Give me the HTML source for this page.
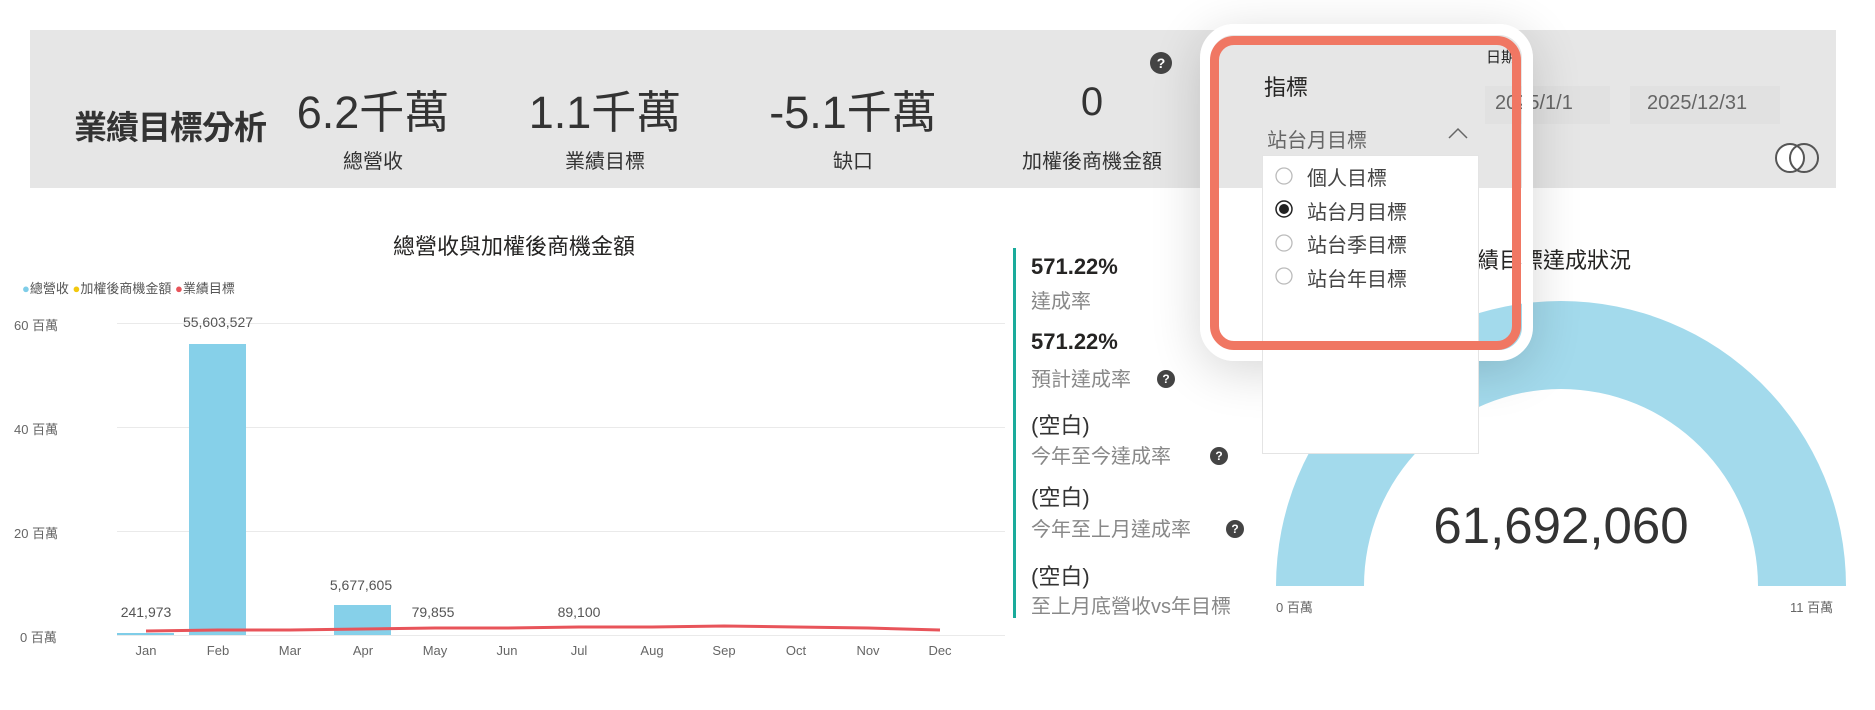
<!DOCTYPE html>
<html><head><meta charset="utf-8"><style>
*{margin:0;padding:0;box-sizing:border-box}
body{width:1875px;height:710px;background:#fff;position:relative;overflow:hidden;font-family:"Liberation Sans","Noto Sans CJK TC",sans-serif;color:#252423}
.a{position:absolute;white-space:nowrap}
.c{transform:translateX(-50%)}
.q{position:absolute;width:18px;height:18px;border-radius:50%;background:#444;color:#fff;font-size:12px;font-weight:bold;text-align:center;line-height:18px}
.ax{font-size:13px;color:#666}
.lbl{font-size:14px;color:#555}
.k1{font-size:22px;font-weight:bold;color:#252423}
.k2{font-size:20px;color:#888}
</style></head><body>
<div class="a" style="left:30px;top:30px;width:1806px;height:158px;background:#e6e6e6"></div>
<div class="a" style="left:74px;top:101px;font-size:33px;font-weight:bold;color:#333;letter-spacing:-1px">業績目標分析</div>
<div class="a c" style="left:373px;top:76px;font-size:45px;color:#333">6.2千萬</div>
<div class="a c" style="left:373px;top:145px;font-size:20px;color:#333">總營收</div>
<div class="a c" style="left:605px;top:76px;font-size:45px;color:#333">1.1千萬</div>
<div class="a c" style="left:605px;top:145px;font-size:20px;color:#333">業績目標</div>
<div class="a c" style="left:853px;top:76px;font-size:45px;color:#333">-5.1千萬</div>
<div class="a c" style="left:853px;top:145px;font-size:20px;color:#333">缺口</div>
<div class="a c" style="left:1092px;top:80px;font-size:40px;color:#333">0</div>
<div class="a c" style="left:1092px;top:145px;font-size:20px;color:#333">加權後商機金額</div>
<div class="q" style="left:1150px;top:52px;width:22px;height:22px;line-height:22px;font-size:14px">?</div>
<div class="a" style="left:1485px;top:86px;width:125px;height:38px;background:#e1e1e1"></div>
<div class="a" style="left:1630px;top:86px;width:150px;height:38px;background:#e1e1e1"></div>
<div class="a" style="left:1495px;top:92px;font-size:20px;color:#666">2025/1/1</div>
<div class="a" style="left:1647px;top:92px;font-size:20px;color:#666">2025/12/31</div>
<div class="a" style="left:1486px;top:46px;font-size:15px;color:#222">日期</div>
<svg class="a" style="left:1770px;top:140px" width="56" height="36"><circle cx="20" cy="18" r="14" fill="#fff" stroke="#555" stroke-width="2"/><circle cx="34" cy="18" r="14" fill="none" stroke="#555" stroke-width="2"/></svg>

<div class="a c" style="left:514px;top:229px;font-size:22px;color:#252423">總營收與加權後商機金額</div>
<div class="a" style="left:22px;top:278px;font-size:13px;color:#555"><span style="color:#7fcde8">●</span>總營收 <span style="color:#f2c80f">●</span>加權後商機金額 <span style="color:#e8545a">●</span>業績目標</div>
<div class="a" style="left:117px;top:323px;width:888px;height:1px;background:#eaeaea"></div>
<div class="a" style="left:117px;top:427px;width:888px;height:1px;background:#eaeaea"></div>
<div class="a" style="left:117px;top:531px;width:888px;height:1px;background:#eaeaea"></div>
<div class="a" style="left:117px;top:635px;width:888px;height:1px;background:#eaeaea"></div>
<div class="a ax" style="left:14px;top:315px">60 百萬</div>
<div class="a ax" style="left:14px;top:419px">40 百萬</div>
<div class="a ax" style="left:14px;top:523px">20 百萬</div>
<div class="a ax" style="left:20px;top:627px">0 百萬</div>
<div class="a" style="left:117px;top:633px;width:57px;height:2px;background:#7fcde8"></div>
<div class="a" style="left:189px;top:344px;width:57px;height:291px;background:#86d0e9"></div>
<div class="a" style="left:334px;top:605px;width:57px;height:30px;background:#86d0e9"></div>
<svg class="a" style="left:0;top:0" width="1010" height="700"><polyline points="146,631 218,630 290,630 363,629 435,628 507,628 579,627 652,627 724,626 796,627 868,628 940,630" fill="none" stroke="#e8545a" stroke-width="3"/></svg>
<div class="a lbl c" style="left:146px;top:604px">241,973</div>
<div class="a lbl c" style="left:218px;top:314px">55,603,527</div>
<div class="a lbl c" style="left:361px;top:577px">5,677,605</div>
<div class="a lbl c" style="left:433px;top:604px">79,855</div>
<div class="a lbl c" style="left:579px;top:604px">89,100</div>
<div class="a ax c" style="left:146px;top:643px">Jan</div><div class="a ax c" style="left:218px;top:643px">Feb</div><div class="a ax c" style="left:290px;top:643px">Mar</div><div class="a ax c" style="left:363px;top:643px">Apr</div><div class="a ax c" style="left:435px;top:643px">May</div><div class="a ax c" style="left:507px;top:643px">Jun</div><div class="a ax c" style="left:579px;top:643px">Jul</div><div class="a ax c" style="left:652px;top:643px">Aug</div><div class="a ax c" style="left:724px;top:643px">Sep</div><div class="a ax c" style="left:796px;top:643px">Oct</div><div class="a ax c" style="left:868px;top:643px">Nov</div><div class="a ax c" style="left:940px;top:643px">Dec</div>

<div class="a" style="left:1013px;top:248px;width:3px;height:370px;background:#1aab9b"></div>
<div class="a k1" style="left:1031px;top:254px">571.22%</div>
<div class="a k2" style="left:1031px;top:285px">達成率</div>
<div class="a k1" style="left:1031px;top:329px">571.22%</div>
<div class="a k2" style="left:1031px;top:363px">預計達成率</div><div class="q" style="left:1157px;top:370px">?</div>
<div class="a k1" style="left:1031px;top:408px;font-weight:normal;color:#333">(空白)</div>
<div class="a k2" style="left:1031px;top:440px">今年至今達成率</div><div class="q" style="left:1210px;top:447px">?</div>
<div class="a k1" style="left:1031px;top:480px;font-weight:normal;color:#333">(空白)</div>
<div class="a k2" style="left:1031px;top:513px">今年至上月達成率</div><div class="q" style="left:1226px;top:520px">?</div>
<div class="a k1" style="left:1031px;top:559px;font-weight:normal;color:#333">(空白)</div>
<div class="a k2" style="left:1031px;top:590px">至上月底營收vs年目標</div>

<div class="a" style="left:1455px;top:243px;font-size:22px;color:#252423">業績目標達成狀況</div>
<svg class="a" style="left:1270px;top:290px" width="590" height="300"><path d="M6,296 A285,285 0 0 1 576,296 L488,296 A197,197 0 0 0 94,296 Z" fill="#a3daec"/></svg>
<div class="a c" style="left:1561px;top:496px;font-size:51px;color:#333">61,692,060</div>
<div class="a ax" style="left:1276px;top:597px">0 百萬</div>
<div class="a ax" style="left:1790px;top:597px">11 百萬</div>

<div class="a" style="left:1200px;top:24px;width:333px;height:337px;border:11px solid #fff;border-radius:34px;box-shadow:0 10px 50px rgba(0,0,0,.16)"></div>
<div class="a" style="left:1262px;top:155px;width:217px;height:299px;background:#fff;border:1px solid #e4e4e4"></div>
<div class="a" style="left:1264px;top:70px;font-size:22px;color:#252423">指標</div>
<div class="a" style="left:1267px;top:124px;font-size:20px;color:#666">站台月目標</div>
<svg class="a" style="left:1447px;top:126px" width="22" height="14"><polyline points="2,12 11,3 20,12" fill="none" stroke="#666" stroke-width="1.5"/></svg>
<svg class="a" style="left:1274px;top:166px" width="22" height="120"><circle cx="10" cy="10" r="8" fill="#fff" stroke="#bbb" stroke-width="1.3"/><circle cx="10" cy="43" r="8" fill="#fff" stroke="#222" stroke-width="1.5"/><circle cx="10" cy="43" r="5" fill="#222"/><circle cx="10" cy="77" r="8" fill="#fff" stroke="#bbb" stroke-width="1.3"/><circle cx="10" cy="110" r="8" fill="#fff" stroke="#bbb" stroke-width="1.3"/></svg>
<div class="a" style="left:1307px;top:163px;font-size:20px;color:#444;line-height:33.5px">個人目標<br>站台月目標<br>站台季目標<br>站台年目標</div>
<div class="a" style="left:1210px;top:36px;width:311px;height:314px;border:9px solid #f07763;border-radius:24px"></div>
</body></html>
